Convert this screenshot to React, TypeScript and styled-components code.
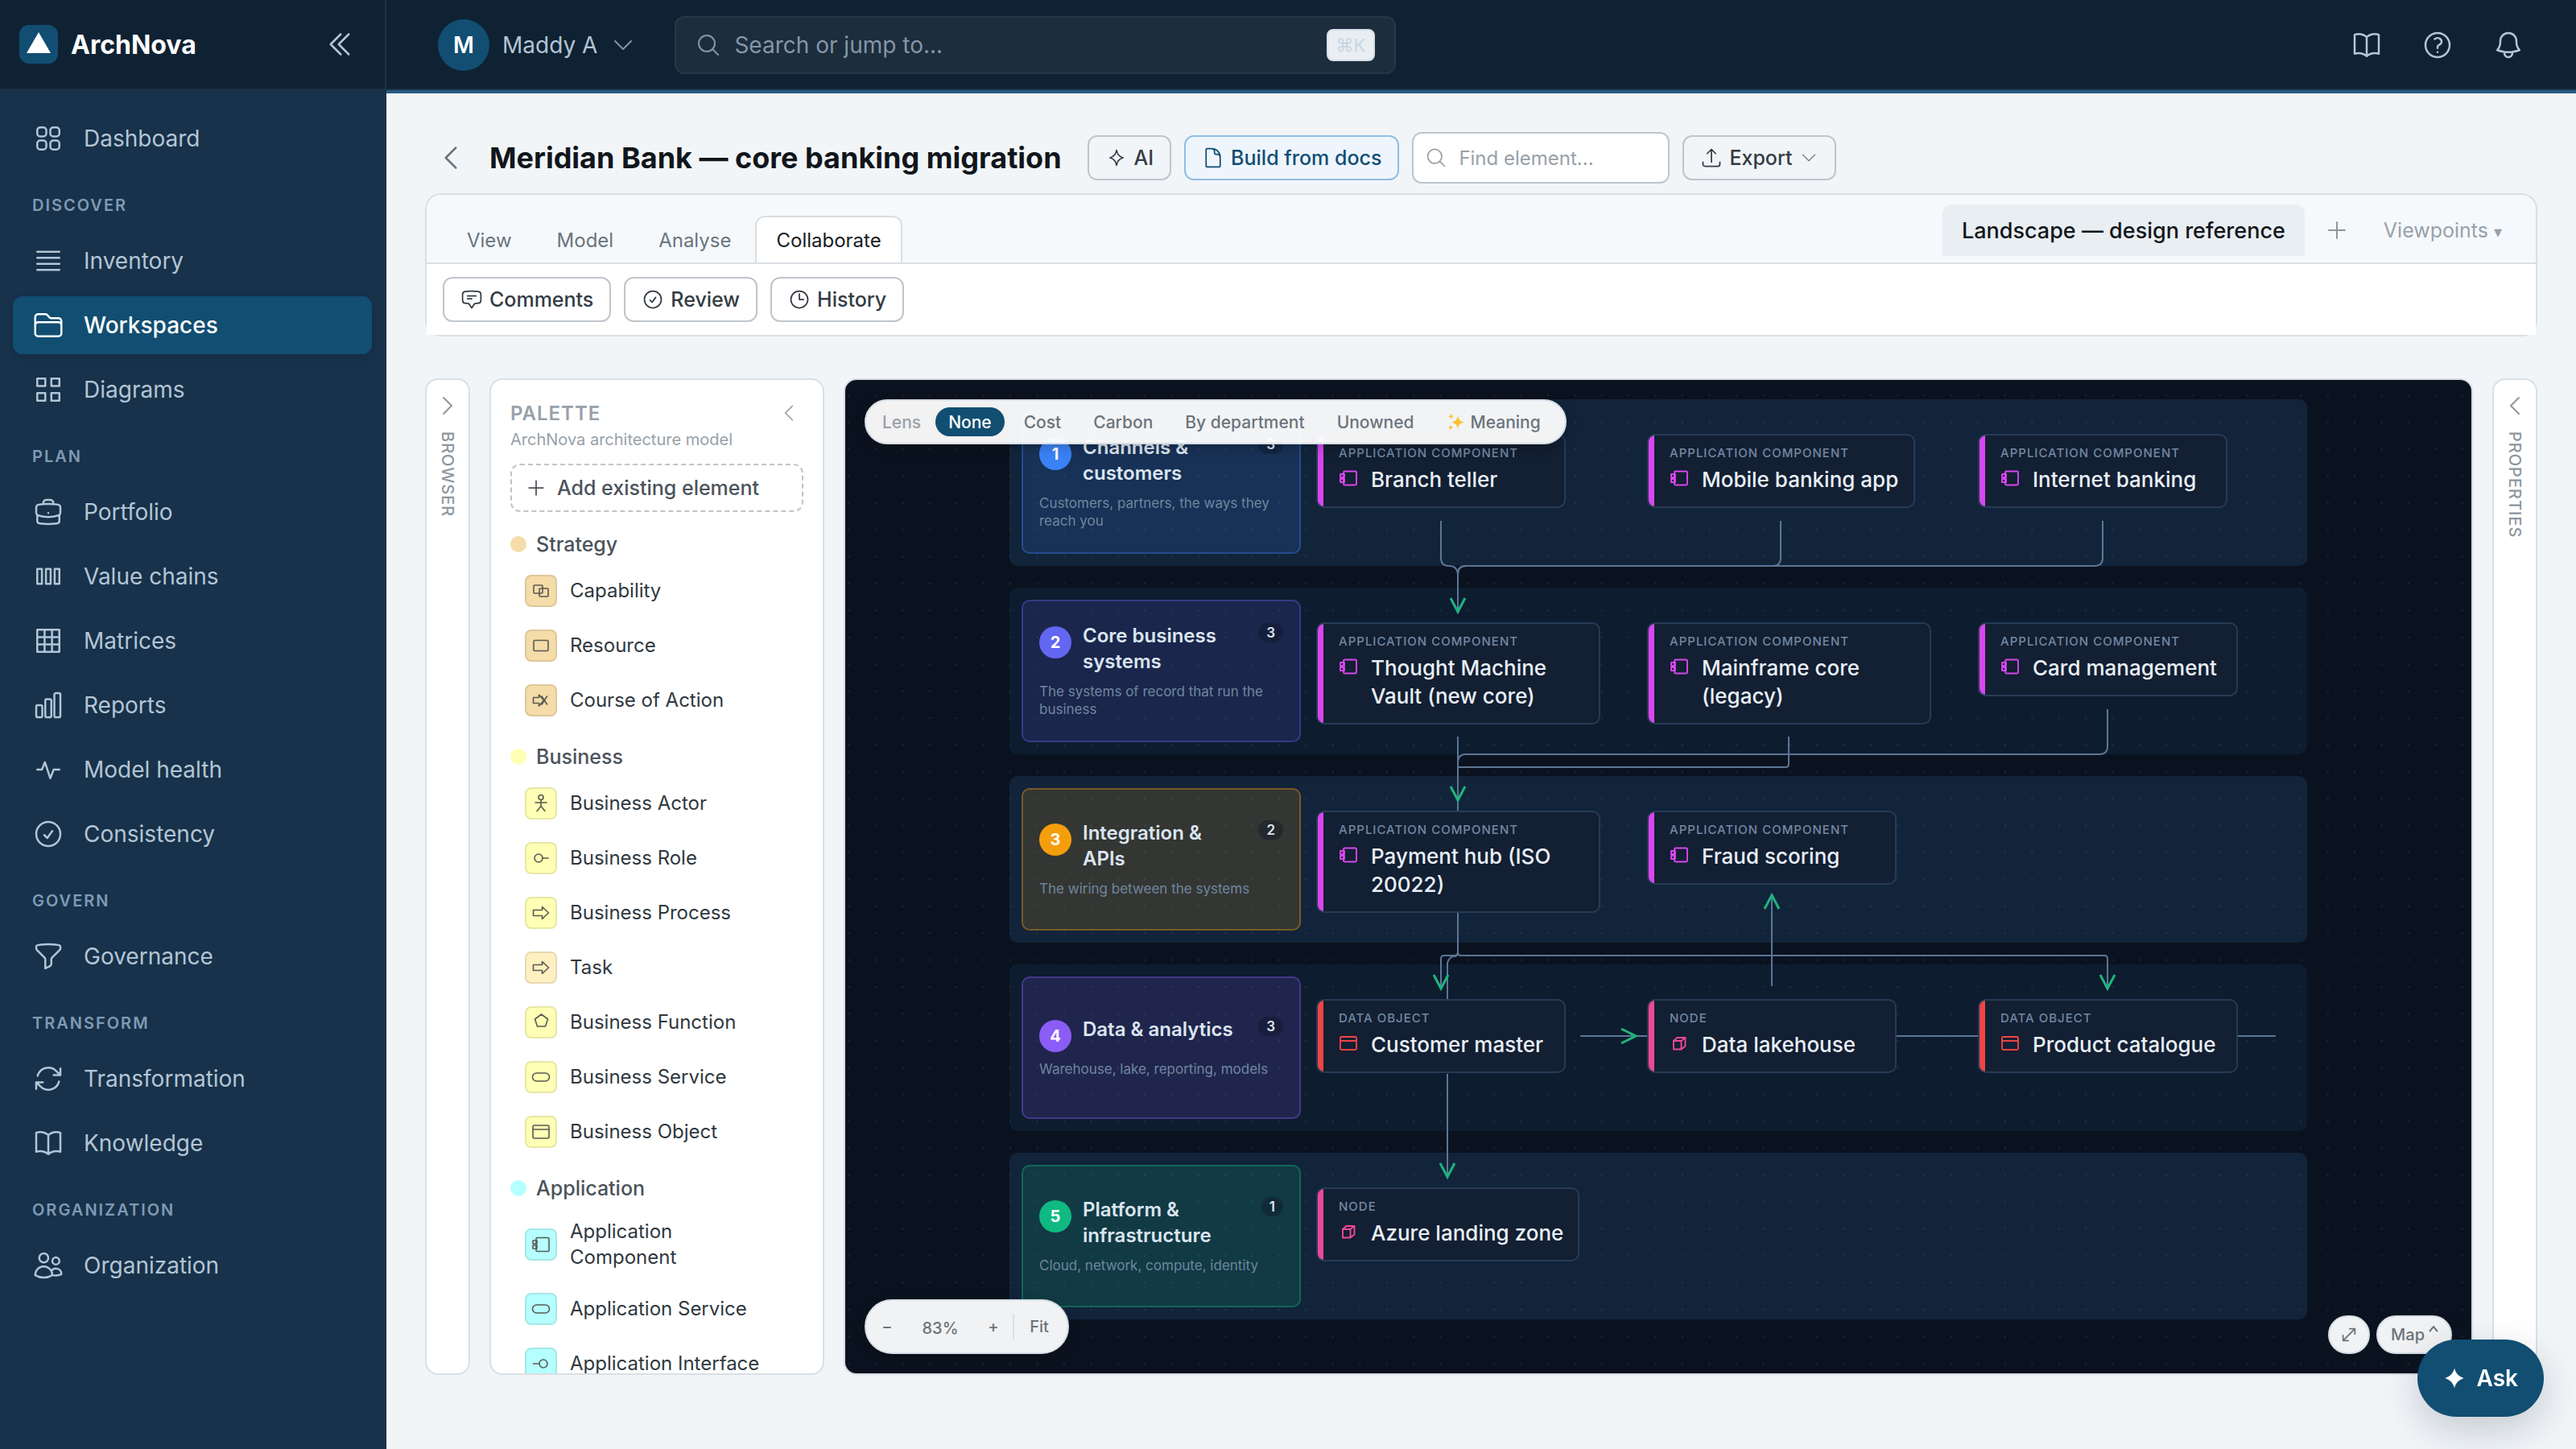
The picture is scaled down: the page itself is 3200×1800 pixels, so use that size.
import type { ReactNode } from "react";
import styled, { createGlobalStyle } from "styled-components";
import {
  HiOutlineArrowPath,
  HiOutlineArrowUpTray,
  HiOutlineBars4,
  HiOutlineBell,
  HiOutlineBookOpen,
  HiOutlineBriefcase,
  HiOutlineChartBar,
  HiOutlineChatBubbleBottomCenterText,
  HiOutlineCheckCircle,
  HiOutlineChevronDoubleLeft,
  HiOutlineChevronDown,
  HiOutlineChevronLeft,
  HiOutlineChevronRight,
  HiOutlineClock,
  HiOutlineDocument,
  HiOutlineFolder,
  HiOutlineFunnel,
  HiOutlineMagnifyingGlass,
  HiOutlinePlus,
  HiOutlineQuestionMarkCircle,
  HiOutlineSquares2X2,
  HiOutlineUsers,
} from "react-icons/hi2";

// ---------- icons that the package doesn't have ----------

const Stroke = ({
  size = 40,
  width = 1.5,
  children,
}: {
  size?: number;
  width?: number;
  children: ReactNode;
}) => (
  <svg
    width={size}
    height={size}
    viewBox="0 0 24 24"
    fill="none"
    stroke="currentColor"
    strokeWidth={width}
    strokeLinecap="round"
    strokeLinejoin="round"
    aria-hidden="true"
  >
    {children}
  </svg>
);

const DiagramsIcon = () => (
  <Stroke>
    <path d="M3.75 3.75h6v5.5h-6zM14.25 3.75h6v5.5h-6zM3.75 14.5h6v5.75h-6zM14.25 14.5h6v5.75h-6z" />
  </Stroke>
);

const ChainsIcon = () => (
  <Stroke>
    <path d="M3.75 6.5h3.5v11h-3.5zM10.25 6.5h3.5v11h-3.5zM16.75 6.5h3.5v11h-3.5z" />
  </Stroke>
);

const MatrixIcon = () => (
  <Stroke>
    <path d="M3.75 3.75h16.5v16.5H3.75zM3.75 9.25h16.5M3.75 14.75h16.5M9.25 3.75v16.5M14.75 3.75v16.5" />
  </Stroke>
);

const PulseIcon = () => (
  <Stroke>
    <path d="M3.75 12h3.5l2.25-5.5 4 12L16 12h4.25" />
  </Stroke>
);

const StarOutline = () => (
  <Stroke size={28} width={1.4}>
    <path d="M12 4c.8 4.6 2.6 7 7 8-4.400 1-6.200 3.400-7 8-.8-4.600-2.600-7-7-8 4.400-1 6.200-3.400 7-8z" />
  </Stroke>
);

const StarSolid = () => (
  <svg width="28" height="28" viewBox="0 0 24 24" fill="currentColor" aria-hidden="true">
    <path d="M12 1.500c1.500 5.500 4.500 8.500 10 10.500-5.500 2-8.500 5-10 10.500C10.500 17 7.500 14 2 12c5.500-2 8.500-5 10-10.500z" />
  </svg>
);

const Sparkles = () => (
  <svg width="24" height="24" viewBox="0 0 24 24" fill="#fdc22f" aria-hidden="true">
    <path d="M14 4c1 5.500 3 7.500 8 8.500-5 1-7 3-8 8.500-1-5.500-3-7.500-8-8.500 5-1 7-3 8-8.500z" />
    <path d="M5.500 1.500c.5 2.500 1.300 3.300 3.500 3.800-2.200.5-3 1.300-3.500 3.700C5 6.600 4.200 5.800 2 5.300c2.200-.5 3-1.300 3.500-3.800z" />
    <path d="M5 15.500c.5 2.300 1.200 3 3 3.500-1.800.5-2.500 1.200-3 3.500-.5-2.300-1.200-3-3-3.500 1.800-.5 2.500-1.200 3-3.500z" />
  </svg>
);

const shapes: Record<string, ReactNode> = {
  capability: (
    <>
      <rect x="3" y="5" width="11" height="10" rx="1" />
      <rect x="10" y="9" width="11" height="10" rx="1" />
    </>
  ),
  resource: <rect x="3" y="5.500" width="18" height="13" rx="1.500" />,
  course: <path d="M2.500 8.500h7V5l6 7-6 7v-3.500h-7zM13 7l6.500 10M19.500 7L13 17" />,
  actor: (
    <>
      <circle cx="12" cy="4.500" r="3" />
      <path d="M12 7.500v8M5 11h14M12 15.500l-5 6M12 15.500l5 6" />
    </>
  ),
  role: (
    <>
      <circle cx="9" cy="12" r="5" />
      <path d="M14 12h7" />
    </>
  ),
  process: <path d="M2.500 8.500h11v-4l8 7.500-8 7.500v-4h-11z" />,
  func: <path d="M12.500 2l8 6-3 9h-10l-3-9z" />,
  service: <rect x="1.500" y="7" width="21" height="10" rx="5" />,
  object: (
    <>
      <rect x="2" y="4" width="20" height="16" rx="1.500" />
      <path d="M2 9h20" />
    </>
  ),
  component: (
    <>
      <rect x="6" y="3.500" width="16" height="17" rx="1.500" />
      <rect x="2" y="7" width="5" height="4" />
      <rect x="2" y="13" width="5" height="4" />
    </>
  ),
  iface: (
    <>
      <circle cx="15" cy="12" r="5" />
      <path d="M2.500 12H10" />
    </>
  ),
  node: <path d="M5 9h9.500v10.500H5zM5 9l4.500-4h10l-5 4M19.500 5v10.500l-5 4" />,
};

// ---------- data ----------

const nav = [
  { title: "", items: [{ name: "Dashboard", icon: <HiOutlineSquares2X2 /> }] },
  {
    title: "Discover",
    items: [
      { name: "Inventory", icon: <HiOutlineBars4 /> },
      { name: "Workspaces", icon: <HiOutlineFolder />, active: true },
      { name: "Diagrams", icon: <DiagramsIcon /> },
    ],
  },
  {
    title: "Plan",
    items: [
      { name: "Portfolio", icon: <HiOutlineBriefcase /> },
      { name: "Value chains", icon: <ChainsIcon /> },
      { name: "Matrices", icon: <MatrixIcon /> },
      { name: "Reports", icon: <HiOutlineChartBar /> },
      { name: "Model health", icon: <PulseIcon /> },
      { name: "Consistency", icon: <HiOutlineCheckCircle /> },
    ],
  },
  { title: "Govern", items: [{ name: "Governance", icon: <HiOutlineFunnel /> }] },
  {
    title: "Transform",
    items: [
      { name: "Transformation", icon: <HiOutlineArrowPath /> },
      { name: "Knowledge", icon: <HiOutlineBookOpen /> },
    ],
  },
  { title: "Organization", items: [{ name: "Organization", icon: <HiOutlineUsers /> }] },
] as { title: string; items: { name: string; icon: ReactNode; active?: boolean }[] }[];

const sand = "#f5dca8";
const yellow = "#ffffb5";
const aqua = "#b5ffff";

const palette = [
  {
    name: "Strategy",
    color: sand,
    items: [
      { name: "Capability", shape: "capability" },
      { name: "Resource", shape: "resource" },
      { name: "Course of Action", shape: "course" },
    ],
  },
  {
    name: "Business",
    color: yellow,
    items: [
      { name: "Business Actor", shape: "actor" },
      { name: "Business Role", shape: "role" },
      { name: "Business Process", shape: "process" },
      { name: "Task", shape: "process", color: "#fff0c2" },
      { name: "Business Function", shape: "func" },
      { name: "Business Service", shape: "service" },
      { name: "Business Object", shape: "object" },
    ],
  },
  {
    name: "Application",
    color: aqua,
    items: [
      { name: "Application Component", shape: "component" },
      { name: "Application Service", shape: "service" },
      { name: "Application Interface", shape: "iface" },
    ],
  },
] as { name: string; color: string; items: { name: string; shape: string; color?: string }[] }[];

const kinds = {
  app: { label: "Application component", color: "#d946ef", shape: "component" },
  data: { label: "Data object", color: "#ef4444", shape: "object" },
  node: { label: "Node", color: "#ec4899", shape: "node" },
};

const lanes: {
  title: string;
  text: string;
  rgb: string;
  nodes: { name: string; kind: keyof typeof kinds; width: number }[];
}[] = [
  {
    title: "Channels & customers",
    text: "Customers, partners, the ways they reach you",
    rgb: "59, 130, 246",
    nodes: [
      { name: "Branch teller", kind: "app", width: 310 },
      { name: "Mobile banking app", kind: "app", width: 333 },
      { name: "Internet banking", kind: "app", width: 310 },
    ],
  },
  {
    title: "Core business systems",
    text: "The systems of record that run the business",
    rgb: "99, 102, 241",
    nodes: [
      { name: "Thought Machine Vault (new core)", kind: "app", width: 353 },
      { name: "Mainframe core (legacy)", kind: "app", width: 353 },
      { name: "Card management", kind: "app", width: 323 },
    ],
  },
  {
    title: "Integration & APIs",
    text: "The wiring between the systems",
    rgb: "245, 158, 11",
    nodes: [
      { name: "Payment hub (ISO 20022)", kind: "app", width: 353 },
      { name: "Fraud scoring", kind: "app", width: 310 },
    ],
  },
  {
    title: "Data & analytics",
    text: "Warehouse, lake, reporting, models",
    rgb: "139, 92, 246",
    nodes: [
      { name: "Customer master", kind: "data", width: 310 },
      { name: "Data lakehouse", kind: "node", width: 310 },
      { name: "Product catalogue", kind: "data", width: 323 },
    ],
  },
  {
    title: "Platform & infrastructure",
    text: "Cloud, network, compute, identity",
    rgb: "16, 185, 129",
    nodes: [{ name: "Azure landing zone", kind: "node", width: 327 }],
  },
];

const edges = [
  "M536 151V197q0 10 10 10t11 10V264",
  "M958 151V197q0 10-10 10H567q-10 0-10 10V264",
  "M1358 151V197q0 10-10 10H567q-10 0-10 10V264",
  "M557 419V511",
  "M968 419V453q0 4-4 4H557",
  "M1364 385V431q0 10-10 10H567q-10 0-10 10",
  "M557 637V687q0 4-4 4H540q-4 0-4 4V732",
  "M557 637V687q0 5-5 5t-8 8V745M544 838V966",
  "M557 687q0 4 4 4H1360q4 0 4 4V732",
  "M947 729V615",
  "M709 791H1573",
];

const arrows = [
  "M548 247l9 17 9-17",
  "M548 481l9 17 9-17",
  "M527 715l9 17 9-17",
  "M535 949l9 17 9-17",
  "M1355 715l9 17 9-17",
  "M938 633l9-17 9 17",
  "M760 782l18 9-18 9",
];

// ---------- page ----------

const App = () => {
  return (
    <Shell>
      <GlobalStyle />
      <Sidebar>
        <Brand>
          <Logo>
            <svg width="30" height="26" viewBox="0 0 30 26" aria-hidden="true">
              <path d="M15 0l15 26H0z" fill="#fff" />
            </svg>
          </Logo>
          <BrandName>ArchNova</BrandName>
          <IconButton aria-label="Collapse sidebar">
            <HiOutlineChevronDoubleLeft />
          </IconButton>
        </Brand>
        <Nav>
          {nav.map((group) => (
            <div key={group.title}>
              {group.title && <NavTitle>{group.title}</NavTitle>}
              <NavList>
                {group.items.map((item) => (
                  <NavLink href="#" key={item.name} $active={item.active}>
                    {item.icon}
                    {item.name}
                  </NavLink>
                ))}
              </NavList>
            </div>
          ))}
        </Nav>
      </Sidebar>

      <Main>
        <Topbar>
          <UserButton>
            <Avatar>M</Avatar>
            Maddy A
            <HiOutlineChevronDown />
          </UserButton>
          <GlobalSearch>
            <HiOutlineMagnifyingGlass />
            <input type="text" placeholder="Search or jump to..." aria-label="Search" />
            <kbd>⌘K</kbd>
          </GlobalSearch>
          <TopIcons>
            <IconButton aria-label="Docs">
              <HiOutlineBookOpen />
            </IconButton>
            <IconButton aria-label="Help">
              <HiOutlineQuestionMarkCircle />
            </IconButton>
            <IconButton aria-label="Notifications">
              <HiOutlineBell />
            </IconButton>
          </TopIcons>
        </Topbar>

        <Page>
          <TitleRow>
            <BackButton aria-label="Back">
              <HiOutlineChevronLeft />
            </BackButton>
            <h1>Meridian Bank — core banking migration</h1>
            <Button>
              <StarOutline />
              AI
            </Button>
            <Button $tone="blue">
              <HiOutlineDocument />
              Build from docs
            </Button>
            <FindBox>
              <HiOutlineMagnifyingGlass />
              <input type="text" placeholder="Find element..." aria-label="Find element" />
            </FindBox>
            <Button>
              <HiOutlineArrowUpTray />
              Export
              <HiOutlineChevronDown className="caret" />
            </Button>
          </TitleRow>

          <Ribbon>
            <Tabs>
              <Tab>View</Tab>
              <Tab>Model</Tab>
              <Tab>Analyse</Tab>
              <Tab $active>Collaborate</Tab>
              <ViewTabs>
                <ViewTab>Landscape — design reference</ViewTab>
                <AddView aria-label="Add view">
                  <HiOutlinePlus />
                </AddView>
                <Viewpoints>
                  Viewpoints <span>▾</span>
                </Viewpoints>
              </ViewTabs>
            </Tabs>
            <Tools>
              <Button $tone="white">
                <HiOutlineChatBubbleBottomCenterText />
                Comments
              </Button>
              <Button $tone="white">
                <HiOutlineCheckCircle />
                Review
              </Button>
              <Button $tone="white">
                <HiOutlineClock />
                History
              </Button>
            </Tools>
          </Ribbon>

          <Workbench>
            <Rail>
              <HiOutlineChevronRight />
              <span>Browser</span>
            </Rail>

            <Palette>
              <PaletteHead>
                <h2>Palette</h2>
                <button aria-label="Collapse palette">
                  <HiOutlineChevronLeft />
                </button>
              </PaletteHead>
              <PaletteNote>ArchNova architecture model</PaletteNote>
              <AddElement>
                <HiOutlinePlus />
                Add existing element
              </AddElement>
              {palette.map((group) => (
                <section key={group.name}>
                  <GroupTitle $color={group.color}>{group.name}</GroupTitle>
                  {group.items.map((item) => (
                    <PaletteItem key={item.name}>
                      <Chip $color={item.color || group.color}>
                        <Stroke size={24} width={1.6}>
                          {shapes[item.shape]}
                        </Stroke>
                      </Chip>
                      {item.name}
                    </PaletteItem>
                  ))}
                </section>
              ))}
            </Palette>

            <Canvas>
              <Diagram>
                {lanes.map((lane, i) => (
                  <Lane key={lane.title} $odd={i % 2 === 0}>
                    <LaneHead $rgb={lane.rgb}>
                      <LaneTitle>
                        <LaneNumber $rgb={lane.rgb}>{i + 1}</LaneNumber>
                        <h3>{lane.title}</h3>
                        <LaneCount>{lane.nodes.length}</LaneCount>
                      </LaneTitle>
                      <p>{lane.text}</p>
                    </LaneHead>
                    {lane.nodes.map((node) => {
                      const kind = kinds[node.kind];
                      return (
                        <Node key={node.name} $color={kind.color} $width={node.width}>
                          <NodeKind>{kind.label}</NodeKind>
                          <NodeName $color={kind.color}>
                            <Stroke size={24} width={1.9}>
                              {shapes[kind.shape]}
                            </Stroke>
                            {node.name}
                          </NodeName>
                        </Node>
                      );
                    })}
                  </Lane>
                ))}
                <Edges viewBox="0 0 1612 1143" width="1612" height="1143" aria-hidden="true">
                  {edges.map((d) => (
                    <path key={d} d={d} stroke="#5b7696" strokeWidth="2" />
                  ))}
                  {arrows.map((d) => (
                    <path key={d} d={d} stroke="#1fb47e" strokeWidth="3" />
                  ))}
                </Edges>
              </Diagram>
              <Dots aria-hidden="true">
                <defs>
                  <pattern id="dots" x="-12" y="2.500" width="33.400" height="33.400" patternUnits="userSpaceOnUse">
                    <circle cx="16.700" cy="16.700" r="1.200" fill="#94a3b8" fillOpacity="0.130" />
                  </pattern>
                </defs>
                <rect width="100%" height="100%" fill="url(#dots)" />
              </Dots>

              <LensBar>
                <span>Lens</span>
                <Lens $active>None</Lens>
                <Lens>Cost</Lens>
                <Lens>Carbon</Lens>
                <Lens>By department</Lens>
                <Lens>Unowned</Lens>
                <Lens>
                  <Sparkles />
                  Meaning
                </Lens>
              </LensBar>
              <ZoomBar>
                <button aria-label="Zoom out">−</button>
                <output>83%</output>
                <button aria-label="Zoom in">+</button>
                <FitButton>Fit</FitButton>
              </ZoomBar>
              <MapBar>
                <MapButton aria-label="Full screen">
                  <Stroke size={22} width={2}>
                    <path d="M4 20L20 4M13 4h7v7M11 20H4v-7" />
                  </Stroke>
                </MapButton>
                <MapButton>
                  Map
                  <svg width="14" height="24" viewBox="0 0 14 24" fill="none" aria-hidden="true">
                    <path d="M2 8l5-6 5 6" stroke="currentColor" strokeWidth="2" />
                  </svg>
                </MapButton>
              </MapBar>
            </Canvas>

            <Rail>
              <HiOutlineChevronLeft />
              <span>Properties</span>
            </Rail>
          </Workbench>
        </Page>
      </Main>

      <AskButton>
        <StarSolid />
        Ask
      </AskButton>
    </Shell>
  );
};

const GlobalStyle = createGlobalStyle`
  * {
    box-sizing: border-box;
  }

  body {
    margin: 0;
    background: #f1f5f8;
    font-family: Inter, "Open Sans", sans-serif;
    font-size: 24px;
    color: #2f3840;
  }

  button, input {
    font: inherit;
    color: inherit;
    background: none;
    border: none;
    padding: 0;
    outline: none;
  }

  h1, h2, h3, p {
    margin: 0;
  }

  svg {
    flex-shrink: 0;
  }
`;

const Shell = styled.div`
  display: grid;
  grid-template-columns: 480px 1fr;
  height: 100vh;
`;

const Sidebar = styled.aside`
  background: #17324a;
`;

const Brand = styled.div`
  display: flex;
  align-items: center;
  gap: 16px;
  height: 112px;
  padding: 0 36px 0 24px;
  background: #0f2233;
  border-right: 2px solid #1d3347;
  border-bottom: 2px solid #1b3044;
`;

const Logo = styled.div`
  display: flex;
  align-items: center;
  justify-content: center;
  width: 48px;
  height: 48px;
  padding-bottom: 4px;
  border-radius: 12px;
  background: #114e72;
`;

const BrandName = styled.div`
  flex: 1;
  font-size: 32px;
  font-weight: 700;
  color: #fff;
`;

const IconButton = styled.button`
  display: flex;
  color: #b4c5d6;

  svg {
    width: 40px;
    height: 40px;
  }
`;

const Nav = styled.nav`
  padding: 24px 18px 24px 16px;
`;

const NavTitle = styled.div`
  padding: 33px 24px 19px;
  font-size: 20px;
  font-weight: 600;
  line-height: 28px;
  letter-spacing: 2px;
  text-transform: uppercase;
  color: #7f9ab5;
`;

const NavList = styled.div`
  display: flex;
  flex-direction: column;
  gap: 8px;
`;

const NavLink = styled.a<{ $active?: boolean }>`
  display: flex;
  align-items: center;
  gap: 24px;
  height: 72px;
  padding: 0 24px;
  border-radius: 12px;
  font-size: 28px;
  font-weight: ${(p) => (p.$active ? 500 : 400)};
  text-decoration: none;
  color: ${(p) => (p.$active ? "#fff" : "#b4c5d6")};
  background: ${(p) => (p.$active ? "#114e72" : "none")};
  box-shadow: ${(p) => (p.$active ? "0 4px 12px rgba(0, 0, 0, 0.12)" : "none")};

  svg {
    width: 40px;
    height: 40px;
  }
`;

const Main = styled.main`
  display: flex;
  flex-direction: column;
  min-width: 0;
  height: 100vh;
`;

const Topbar = styled.header`
  display: flex;
  align-items: center;
  height: 116px;
  flex-shrink: 0;
  padding: 0 64px;
  background: #0f2233;
  border-bottom: 4px solid #255b84;
  box-shadow: inset 0 -2px 0 #1b3044;
`;

const UserButton = styled.button`
  display: flex;
  align-items: center;
  gap: 16px;
  margin-right: 48px;
  font-size: 28px;
  color: #b4c5d6;

  svg {
    width: 32px;
    height: 32px;
    color: #7f95aa;
  }
`;

const Avatar = styled.span`
  display: flex;
  align-items: center;
  justify-content: center;
  width: 64px;
  height: 64px;
  border-radius: 50%;
  background: #114e72;
  color: #fff;
  font-size: 28px;
  font-weight: 600;
`;

const GlobalSearch = styled.label`
  display: flex;
  align-items: center;
  gap: 16px;
  width: 896px;
  height: 72px;
  padding: 0 24px;
  border: 2px solid #253849;
  border-radius: 12px;
  background: #1c2d3c;
  color: #8496a8;

  svg {
    width: 32px;
    height: 32px;
  }

  input {
    flex: 1;
    font-size: 28px;
  }

  input::placeholder {
    color: #8496a8;
  }

  kbd {
    height: 40px;
    padding: 0 10px;
    border: 2px solid #d6dfe6;
    border-radius: 8px;
    background: #e9eef2;
    color: #c6d5e4;
    font-family: Inter, "DejaVu Sans", sans-serif;
    font-size: 22px;
    line-height: 36px;
  }
`;

const TopIcons = styled.div`
  display: flex;
  gap: 48px;
  margin-left: auto;
`;

const Page = styled.div`
  display: flex;
  flex-direction: column;
  flex: 1;
  min-height: 0;
  padding: 48px 48px 92px;
`;

const TitleRow = styled.div`
  display: flex;
  align-items: center;
  gap: 16px;
  height: 64px;
  margin-bottom: 12px;
  padding-left: 12px;

  h1 {
    margin-left: 12px;
    margin-right: 16px;
    font-size: 36px;
    font-weight: 700;
    color: #11161b;
  }
`;

const BackButton = styled.button`
  display: flex;
  color: #6b747c;

  svg {
    width: 40px;
    height: 40px;
  }
`;

const tones = {
  plain: { border: "#bfc5cc", bg: "transparent", text: "#333c45" },
  white: { border: "#bfc5cc", bg: "#fff", text: "#333c45" },
  blue: { border: "#92bde0", bg: "#eef5fd", text: "#114e72" },
};

const Button = styled.button<{ $tone?: keyof typeof tones }>`
  display: flex;
  align-items: center;
  gap: 8px;
  height: 56px;
  padding: 0 20px;
  border: 2px solid ${(p) => tones[p.$tone || "plain"].border};
  border-radius: 12px;
  background: ${(p) => tones[p.$tone || "plain"].bg};
  color: ${(p) => tones[p.$tone || "plain"].text};
  font-size: 25px;
  font-weight: 500;
  white-space: nowrap;

  svg {
    width: 28px;
    height: 28px;
  }

  .caret {
    width: 24px;
    height: 24px;
    color: #7b848c;
  }
`;

const FindBox = styled.label`
  display: flex;
  align-items: center;
  gap: 14px;
  width: 320px;
  height: 64px;
  padding: 0 14px;
  border: 2px solid #bfc5cc;
  border-radius: 12px;
  background: #fff;
  color: #98a1a9;

  svg {
    width: 28px;
    height: 28px;
  }

  input {
    flex: 1;
    min-width: 0;
    font-size: 24px;
  }

  input::placeholder {
    color: #98a1a9;
  }
`;

const Ribbon = styled.section`
  margin-bottom: 52px;
  border: 2px solid #d9dfe4;
  border-radius: 20px;
`;

const Tabs = styled.div`
  display: flex;
  align-items: flex-end;
  gap: 4px;
  height: 86px;
  padding: 0 24px;
  border-bottom: 2px solid #d9dfe4;
  border-radius: 18px 18px 0 0;
  background: #f5f9fc;
`;

const Tab = styled.button<{ $active?: boolean }>`
  height: 58px;
  padding: 0 24px;
  border: 2px solid ${(p) => (p.$active ? "#d9dfe4" : "transparent")};
  border-bottom: none;
  border-radius: 12px 12px 0 0;
  background: ${(p) => (p.$active ? "#fff" : "none")};
  color: ${(p) => (p.$active ? "#171d22" : "#6b747c")};
  font-size: 24px;
`;

const ViewTabs = styled.div`
  display: flex;
  align-items: center;
  margin: 0 0 8px auto;
`;

const ViewTab = styled.button`
  height: 64px;
  padding: 0 24px;
  border-radius: 12px 12px 0 0;
  background: #e9eef2;
  color: #11161b;
  font-size: 27px;
  font-weight: 500;
`;

const AddView = styled.button`
  display: flex;
  padding: 0 24px;
  color: #8d979f;

  svg {
    width: 32px;
    height: 32px;
  }
`;

const Viewpoints = styled.button`
  padding: 0 18px;
  font-size: 25px;
  color: #98a1a9;

  span {
    font-size: 20px;
  }
`;

const Tools = styled.div`
  display: flex;
  gap: 16px;
  padding: 16px 20px;
  background: #fff;
`;

const Workbench = styled.div`
  display: grid;
  grid-template-columns: 56px 416px 1fr 56px;
  gap: 24px;
  flex: 1;
  min-height: 0;
`;

const Rail = styled.button`
  display: flex;
  flex-direction: column;
  align-items: center;
  justify-content: flex-start;
  gap: 16px;
  padding-top: 16px;
  border: 2px solid #d9dfe4;
  border-radius: 16px;
  background: #fff;
  color: #8d979f;

  svg {
    width: 32px;
    height: 32px;
  }

  span {
    writing-mode: vertical-rl;
    font-size: 20px;
    font-weight: 500;
    letter-spacing: 1px;
    text-transform: uppercase;
  }
`;

const Palette = styled.aside`
  min-height: 0;
  padding: 24px 24px 0;
  border: 2px solid #d9dfe4;
  border-radius: 16px;
  background: #fff;
  overflow: hidden;
`;

const PaletteHead = styled.div`
  display: flex;
  align-items: center;
  justify-content: space-between;
  height: 34px;
  padding-right: 4px;
  color: #98a1a9;

  h2 {
    font-size: 24px;
    font-weight: 600;
    letter-spacing: 1px;
    text-transform: uppercase;
  }

  button {
    display: flex;
  }

  svg {
    width: 28px;
    height: 28px;
  }
`;

const PaletteNote = styled.p`
  margin-bottom: 14px;
  font-size: 20px;
  line-height: 32px;
  color: #98a1a9;
`;

const AddElement = styled.button`
  display: flex;
  align-items: center;
  gap: 12px;
  width: 100%;
  height: 60px;
  margin-bottom: 2px;
  padding: 0 16px;
  border: 2px dashed #bfc5cc;
  border-radius: 12px;
  color: #4b535b;
  font-size: 25px;
  font-weight: 500;

  svg {
    width: 28px;
    height: 28px;
  }
`;

const GroupTitle = styled.h3<{ $color: string }>`
  display: flex;
  align-items: center;
  gap: 12px;
  padding: 22px 0 10px;
  font-size: 25px;
  font-weight: 500;
  line-height: 32px;
  color: #4b535b;

  &::before {
    content: "";
    width: 20px;
    height: 20px;
    border-radius: 50%;
    background: ${(p) => p.$color};
  }
`;

const PaletteItem = styled.button`
  display: flex;
  align-items: center;
  gap: 16px;
  width: 100%;
  margin-bottom: 4px;
  padding: 12px 40px 12px 18px;
  font-size: 24px;
  line-height: 32px;
  text-align: left;

  &:last-child {
    margin-bottom: 0;
  }
`;

const Chip = styled.span<{ $color: string }>`
  display: flex;
  align-items: center;
  justify-content: center;
  flex-shrink: 0;
  width: 40px;
  height: 40px;
  border: 2px solid rgba(60, 60, 60, 0.12);
  border-radius: 8px;
  background: ${(p) => p.$color};
  color: #585a52;
`;

const Canvas = styled.section`
  position: relative;
  min-width: 0;
  padding-top: 24px;
  border: 2px solid #d5dce2;
  border-radius: 16px;
  background: #0b121f;
  overflow: hidden;
`;

const Diagram = styled.div`
  position: relative;
  display: flex;
  flex-direction: column;
  gap: 27px;
  width: 1612px;
  margin: 0 auto;
`;

const Lane = styled.div<{ $odd: boolean }>`
  display: grid;
  grid-template-columns: 366px 411px 411px 1fr;
  align-items: start;
  height: 207px;
  padding: 15px 0 15px 15px;
  border-radius: 10px;
  background: ${(p) => (p.$odd ? "#12243a" : "#0d1c2f")};
`;

const LaneHead = styled.div<{ $rgb: string }>`
  position: relative;
  z-index: 1;
  display: flex;
  flex-direction: column;
  justify-content: center;
  gap: 10px;
  height: 177px;
  margin-right: 19px;
  padding: 0 20px 2px;
  border: 2px solid rgba(${(p) => p.$rgb}, 0.35);
  border-radius: 10px;
  background: rgba(${(p) => p.$rgb}, 0.15);

  h3 {
    flex: 1;
    padding-right: 8px;
    font-size: 24px;
    font-weight: 600;
    line-height: 32px;
    color: #dbe5f0;
  }

  p {
    font-size: 17px;
    line-height: 22px;
    color: #6f869f;
  }
`;

const LaneTitle = styled.div`
  display: flex;
  align-items: flex-start;
  gap: 14px;
`;

const LaneNumber = styled.span<{ $rgb: string }>`
  width: 40px;
  height: 40px;
  margin-top: 4px;
  border-radius: 50%;
  background: rgb(${(p) => p.$rgb});
  color: #fff;
  font-size: 20px;
  font-weight: 700;
  line-height: 40px;
  text-align: center;
`;

const LaneCount = styled.span`
  height: 24px;
  padding: 0 10px;
  border-radius: 12px;
  background: rgba(15, 20, 35, 0.4);
  color: #dbe5f0;
  font-size: 17px;
  font-weight: 600;
  line-height: 24px;
`;

const Node = styled.article<{ $color: string; $width: number }>`
  position: relative;
  z-index: 2;
  width: ${(p) => p.$width}px;
  margin-top: 28px;
  padding: 11px 12px 16px 26px;
  border: 2px solid #263b56;
  border-radius: 10px;
  background: linear-gradient(to right, ${(p) => p.$color} 7px, #131f32 7px);
`;

const NodeKind = styled.div`
  font-size: 15px;
  font-weight: 500;
  line-height: 22px;
  letter-spacing: 1px;
  text-transform: uppercase;
  white-space: nowrap;
  color: #7288a3;
`;

const NodeName = styled.div<{ $color: string }>`
  display: flex;
  gap: 16px;
  padding-top: 4px;
  font-size: 26px;
  font-weight: 500;
  line-height: 35px;
  color: #e8eff7;

  svg {
    margin-top: 4px;
    color: ${(p) => p.$color};
  }
`;

const Edges = styled.svg`
  position: absolute;
  top: 0;
  left: 0;
  z-index: 1;
  fill: none;
`;

const Dots = styled.svg`
  position: absolute;
  top: 0;
  left: 0;
  width: 100%;
  height: 100%;
`;

const Floating = styled.div`
  position: absolute;
  z-index: 3;
  display: flex;
  align-items: center;
`;

const LensBar = styled(Floating)`
  top: 24px;
  left: 24px;
  gap: 8px;
  height: 56px;
  padding: 0 14px 0 20px;
  border: 2px solid #d5dfe6;
  border-radius: 28px;
  background: rgba(255, 255, 255, 0.95);
  box-shadow: 0 4px 16px rgba(0, 0, 0, 0.2);
  font-size: 21px;
  font-weight: 500;
  color: #98a1a9;

  span {
    margin-right: 10px;
  }
`;

const Lens = styled.button<{ $active?: boolean }>`
  display: flex;
  align-items: center;
  gap: 6px;
  height: 36px;
  padding: 0 16px;
  border-radius: 18px;
  background: ${(p) => (p.$active ? "#114e72" : "none")};
  color: ${(p) => (p.$active ? "#fff" : "#6b747c")};
`;

const ZoomBar = styled(Floating)`
  bottom: 24px;
  left: 24px;
  height: 68px;
  padding: 0 4px;
  border: 2px solid #d5dfe6;
  border-radius: 34px;
  background: #f1f2f3;
  box-shadow: 0 4px 16px rgba(0, 0, 0, 0.2);
  font-size: 20px;
  font-weight: 500;
  color: #6b747c;

  button {
    width: 44px;
    height: 44px;
  }

  output {
    width: 88px;
    padding-top: 4px;
    text-align: center;
  }
`;

const FitButton = styled.button`
  && {
    width: 64px;
    height: 32px;
    margin-left: 2px;
    border-left: 2px solid #d9dfe4;
  }
`;

const MapBar = styled(Floating)`
  right: 24px;
  bottom: 24px;
  gap: 8px;
`;

const MapButton = styled.button`
  display: flex;
  align-items: center;
  justify-content: center;
  gap: 4px;
  height: 48px;
  min-width: 52px;
  padding: 0 14px 0 16px;
  border: 2px solid #d5dfe6;
  border-radius: 24px;
  background: #f1f2f3;
  color: #6b747c;
  font-size: 20px;
  font-weight: 500;

  &:first-child {
    padding: 0;
  }
`;

const AskButton = styled.button`
  position: fixed;
  right: 40px;
  bottom: 40px;
  z-index: 4;
  display: flex;
  align-items: center;
  gap: 14px;
  height: 96px;
  padding: 0 32px;
  border-radius: 48px;
  background: #114e72;
  color: #fff;
  font-size: 28px;
  font-weight: 600;
  box-shadow: 0 16px 48px rgba(20, 30, 50, 0.2);
`;

export default App;
